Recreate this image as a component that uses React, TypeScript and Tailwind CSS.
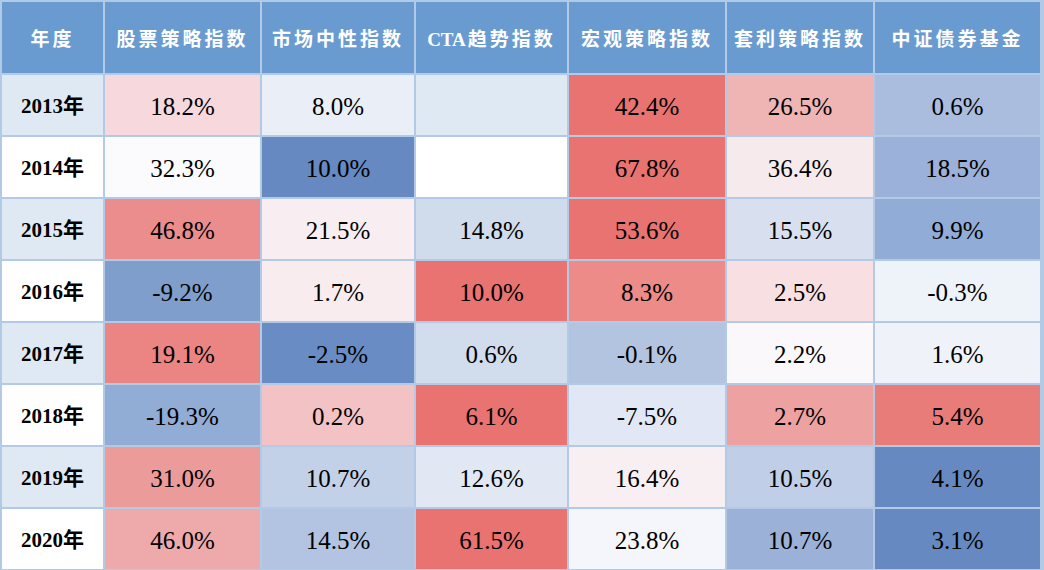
const header = ["年度", "股票策略指数", "市场中性指数", "CTA趋势指数", "宏观策略指数", "套利策略指数", "中证债券基金"];

type Cell = { v: string; bg: string };

const rows: { year: string; yearBg: string; cells: Cell[] }[] = [
  {
    year: "2013年",
    yearBg: "bg-[#dfe9f4]",
    cells: [
      { v: "18.2%", bg: "bg-[#f7d8dc]" },
      { v: "8.0%", bg: "bg-[#e9eef7]" },
      { v: "", bg: "bg-[#dfe9f4]" },
      { v: "42.4%", bg: "bg-[#e87370]" },
      { v: "26.5%", bg: "bg-[#efb4b4]" },
      { v: "0.6%", bg: "bg-[#aabddf]" },
    ],
  },
  {
    year: "2014年",
    yearBg: "bg-white",
    cells: [
      { v: "32.3%", bg: "bg-[#fbfbfd]" },
      { v: "10.0%", bg: "bg-[#6689c2]" },
      { v: "", bg: "bg-white" },
      { v: "67.8%", bg: "bg-[#e87370]" },
      { v: "36.4%", bg: "bg-[#f6eaed]" },
      { v: "18.5%", bg: "bg-[#9cb1d9]" },
    ],
  },
  {
    year: "2015年",
    yearBg: "bg-[#dfe9f4]",
    cells: [
      { v: "46.8%", bg: "bg-[#eb8d8c]" },
      { v: "21.5%", bg: "bg-[#f8eef2]" },
      { v: "14.8%", bg: "bg-[#d0dbec]" },
      { v: "53.6%", bg: "bg-[#e87370]" },
      { v: "15.5%", bg: "bg-[#d8dfee]" },
      { v: "9.9%", bg: "bg-[#91acd6]" },
    ],
  },
  {
    year: "2016年",
    yearBg: "bg-white",
    cells: [
      { v: "-9.2%", bg: "bg-[#7f9ecb]" },
      { v: "1.7%", bg: "bg-[#f8ecef]" },
      { v: "10.0%", bg: "bg-[#e87370]" },
      { v: "8.3%", bg: "bg-[#ec8b88]" },
      { v: "2.5%", bg: "bg-[#f7dfe2]" },
      { v: "-0.3%", bg: "bg-[#eef2f9]" },
    ],
  },
  {
    year: "2017年",
    yearBg: "bg-[#dfe9f4]",
    cells: [
      { v: "19.1%", bg: "bg-[#eb8583]" },
      { v: "-2.5%", bg: "bg-[#6a8cc4]" },
      { v: "0.6%", bg: "bg-[#d1dcec]" },
      { v: "-0.1%", bg: "bg-[#b3c4e1]" },
      { v: "2.2%", bg: "bg-[#faf8fb]" },
      { v: "1.6%", bg: "bg-[#eff2f9]" },
    ],
  },
  {
    year: "2018年",
    yearBg: "bg-white",
    cells: [
      { v: "-19.3%", bg: "bg-[#91acd5]" },
      { v: "0.2%", bg: "bg-[#f3c2c5]" },
      { v: "6.1%", bg: "bg-[#e87370]" },
      { v: "-7.5%", bg: "bg-[#e1e7f4]" },
      { v: "2.7%", bg: "bg-[#eea1a1]" },
      { v: "5.4%", bg: "bg-[#e87c78]" },
    ],
  },
  {
    year: "2019年",
    yearBg: "bg-[#dfe9f4]",
    cells: [
      { v: "31.0%", bg: "bg-[#ec9b9b]" },
      { v: "10.7%", bg: "bg-[#c3d1e8]" },
      { v: "12.6%", bg: "bg-[#e1e8f4]" },
      { v: "16.4%", bg: "bg-[#f8eff3]" },
      { v: "10.5%", bg: "bg-[#c0cee7]" },
      { v: "4.1%", bg: "bg-[#6689c2]" },
    ],
  },
  {
    year: "2020年",
    yearBg: "bg-white",
    cells: [
      { v: "46.0%", bg: "bg-[#eea9aa]" },
      { v: "14.5%", bg: "bg-[#b2c4e1]" },
      { v: "61.5%", bg: "bg-[#e87370]" },
      { v: "23.8%", bg: "bg-[#f4f6fb]" },
      { v: "10.7%", bg: "bg-[#9bb1d8]" },
      { v: "3.1%", bg: "bg-[#6689c2]" },
    ],
  },
];

export default function App() {
  return (
    <div className="h-[570px] w-[1044px] overflow-hidden bg-[#b3cae7] pb-px pl-[2px] pr-[4px] pt-[2px]">
      <div className="grid grid-cols-[101px_155px_152px_151px_156px_146px_165px] grid-rows-[71px_repeat(8,60px)] gap-[2px]">
        {header.map((h) => (
          <div
            key={h}
            className="flex items-center justify-center bg-[#6a9bd0] pt-[5px] font-['Liberation_Serif','Noto_Sans_CJK_SC',serif] text-[19px] font-bold tracking-[3px] text-white"
          >
            {h.startsWith("CTA") ? (
              <>
                <span className="mr-[2px] tracking-normal">CTA</span>
                {h.slice(3)}
              </>
            ) : (
              h
            )}
          </div>
        ))}
        {rows.map((row) => (
          <Row key={row.year} year={row.year} yearBg={row.yearBg} cells={row.cells} />
        ))}
      </div>
    </div>
  );
}

function Row({ year, yearBg, cells }: { year: string; yearBg: string; cells: Cell[] }) {
  return (
    <>
      <div
        className={`flex items-center justify-center ${yearBg} pt-[3px] font-['Liberation_Serif','Noto_Sans_CJK_SC',serif] text-[21px] font-bold text-black`}
      >
        {year}
      </div>
      {cells.map((c, i) => (
        <div
          key={i}
          className={`flex items-center justify-center ${c.bg} pt-[3px] font-['Liberation_Serif',serif] text-[25px] text-black`}
        >
          {c.v}
        </div>
      ))}
    </>
  );
}
